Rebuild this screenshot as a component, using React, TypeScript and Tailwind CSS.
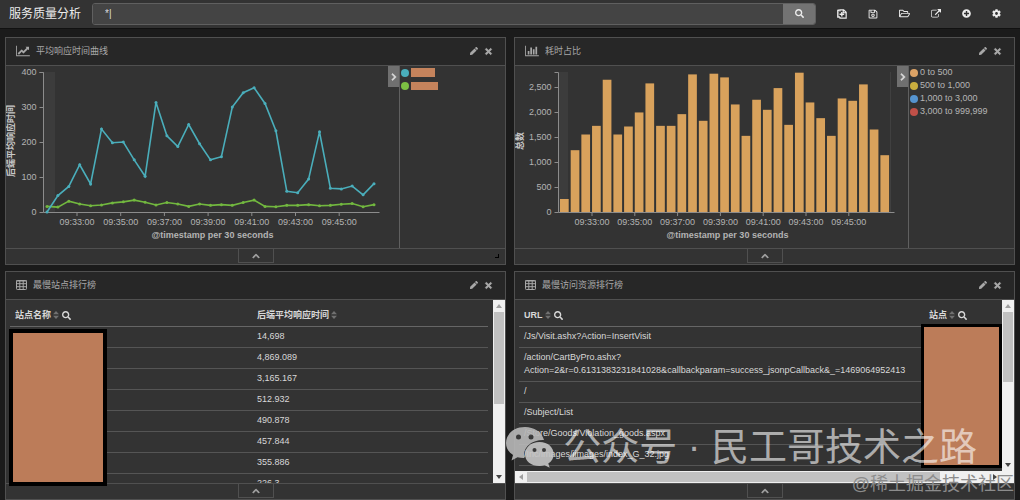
import React from "react";
import { twMerge } from "tailwind-merge";
import {
  FaChevronRight,
  FaChevronUp,
  FaCog,
  FaPen,
  FaPlusCircle,
  FaRegFolderOpen,
  FaRegSave,
  FaSearch,
  FaTimes,
} from "react-icons/fa";

const AVG = [
  0, 47, 73, 135, 80, 237, 198, 200, 149, 102, 313, 218, 187, 250, 195, 149,
  158, 300, 341, 355, 310, 232, 59, 55, 94, 229, 68, 66, 74, 49, 81,
];
const AVG_LOW = [
  16, 14, 31, 23, 18, 20, 26, 29, 34, 28, 20, 27, 23, 16, 23, 19, 21, 19, 27,
  34, 16, 15, 19, 19, 21, 18, 19, 22, 24, 15, 21,
];
const COUNTS = [
  260, 1236, 1550, 1723, 2645, 1550, 1710, 1991, 2572, 1723, 1723, 1957, 2752,
  1824, 2766, 2692, 2151, 1523, 2245, 2044, 2478, 1743, 2786, 2191, 1877, 1523,
  2271, 2224, 2552, 1650, 1136,
];
const TIMES = [
  "09:33:00",
  "09:35:00",
  "09:37:00",
  "09:39:00",
  "09:41:00",
  "09:43:00",
  "09:45:00",
];
const SITE_TIMES = [
  "14,698",
  "4,869.089",
  "3,165.167",
  "512.932",
  "490.878",
  "457.844",
  "355.886",
  "226.3",
];
const URLS = [
  "/Js/Visit.ashx?Action=InsertVisit",
  "/action/CartByPro.ashx?Action=2&r=0.6131383231841028&callbackparam=success_jsonpCallback&_=1469064952413",
  "/",
  "/Subject/List",
  "/Store/Goods/Violation_goods.aspx",
  "/Inc/images/iimages/index_G_32.jpg",
  "/shopping.ashx/list",
];

const LineChartIcon = () => (
  <svg viewBox="0 0 2048 1792" className="w-[14px] h-3" fill="currentColor">
    <path d="M2048 1536v128H0V128h128v1408h1920zM1920 288v435q0 21-19.5 29.5t-35.5-7.5l-121-121-633 633q-10 10-23 10t-23-10L832 1025l-416 416-192-192 585-585q10-10 23-10t23 10l233 233 464-464-121-121q-16-16-7.5-35.5t29.5-19.5h435q14 0 23 9t9 23z" />
  </svg>
);

const BarChartIcon = () => (
  <svg viewBox="0 0 2048 1792" className="w-[14px] h-3" fill="currentColor">
    <path d="M640 896v512H384V896h256zm384-512v1024H768V384h256zm1024 1152v128H0V128h128v1408h1920zm-640-896v768h-256V640h256zm384-384v1152h-256V256h256z" />
  </svg>
);

const TableIcon = () => (
  <svg viewBox="0 0 11 10" className="w-[11px] h-[10px]" fill="none" stroke="currentColor">
    <rect x="0.5" y="0.5" width="10" height="9" rx="0.8" />
    <path d="M0 1h11M0 3.7h11M0 6.7h11M3.8 0v10M7.2 0v10" />
  </svg>
);

const NewIcon = () => (
  <svg viewBox="0 0 12 12" className="size-[10px]" fill="none" stroke="currentColor" strokeWidth="1.4">
    <path d="M3.500 3V1H8l3 3v7H3.500V9.500M7.500 1v3.500H11" />
    <path d="M1 1.500h2M1 1v8.500h2.500M3 6.300h5.600M5.800 3.500v5.600" strokeWidth="1.7" />
  </svg>
);

const ExternalIcon = () => (
  <svg viewBox="0 0 1792 1792" className="size-[10px]" fill="currentColor">
    <path d="M1408 928v320q0 119-84.5 203.5T1120 1536H288q-119 0-203.5-84.5T0 1248V416q0-119 84.5-203.5T288 128h704q14 0 23 9t9 23v64q0 14-9 23t-23 9H288q-66 0-113 47t-47 113v832q0 66 47 113t113 47h832q66 0 113-47t47-113V928q0-14 9-23t23-9h64q14 0 23 9t9 23zM1792 64v512q0 26-19 45t-45 19-45-19l-176-176-652 652q-10 10-23 10t-23-10l-114-114q-10-10-10-23t10-23l652-652-176-176q-19-19-19-45t19-45 45-19h512q26 0 45 19t19 45z" />
  </svg>
);

const SortIcon = () => (
  <svg viewBox="0 0 6 8" className="w-[6px] h-2 text-[#707070]" fill="currentColor">
    <path d="M3 0l3 3.3H0zM3 8l3-3.3H0z" />
  </svg>
);

const WechatIcon = () => (
  <svg viewBox="0 0 50 42" className="w-[50px] h-[42px]">
    <path
      fill="#b9b9b9"
      d="M20 1C9 1 1 8 1 17c0 5 2.500 9 7 12l-1.500 5.500 6-3.200c2.300.6 4.500.9 7 .8C17 22 26 13.500 39 14 37 6 29 1 20 1z"
    />
    <path
      fill="#c6c6c6"
      d="M34.500 16C26 16 20 21.500 20 28.200S26 40 34.500 40c1.800 0 3.500-.3 5.200-.8l5 2.500-1.400-4.200c3.500-2.300 5.400-5.500 5.400-9.300C48.700 21.500 43 16 34.500 16z"
    />
    <g fill="#3a3a3a">
      <circle cx="13.500" cy="11" r="2.500" />
      <circle cx="26" cy="11" r="2.500" />
      <circle cx="29.500" cy="24" r="2" />
      <circle cx="39" cy="24" r="2" />
    </g>
  </svg>
);

type AxesProps = {
  axisX: number;
  labels: { text: string; y: number }[];
  firstTick: number;
  tickStep: number;
  title: string;
};

const Axes: React.FC<AxesProps> = ({ axisX, labels, firstTick, tickStep, title }) => (
  <>
    <g stroke="#8c8c8c" fill="none">
      <path d={`M${axisX - 4} 6.500H${axisX}V146.500H${axisX + 336}`} />
      {labels.map(({ text, y }) => (
        <path key={text} d={`M${axisX - 4} ${y}h4`} />
      ))}
      {TIMES.map((t, i) => (
        <path key={t} d={`M${firstTick + i * tickStep} 146v4`} />
      ))}
    </g>
    <g className="text-[9px]" fill="#b4b4b4">
      {labels.map(({ text, y }) => (
        <text key={text} x={axisX - 7} y={y + 2} textAnchor="end">
          {text}
        </text>
      ))}
      {TIMES.map((t, i) => (
        <text key={t} x={firstTick + i * tickStep} y="159" textAnchor="middle">
          {t}
        </text>
      ))}
      <text x={axisX + 169} y="172" textAnchor="middle" className="font-bold">
        @timestamp per 30 seconds
      </text>
      <text
        transform="translate(8 75) rotate(-90)"
        textAnchor="middle"
        className="font-bold"
        fill="#c8c8c8"
      >
        {title}
      </text>
    </g>
  </>
);

const Series: React.FC<{ values: number[]; color: string }> = ({ values, color }) => {
  const points = values.map((v, i) => [41 + i * 10.9, 146 - v * 0.35]);
  return (
    <g fill={color}>
      <polyline
        points={points.map((p) => p.join(",")).join(" ")}
        fill="none"
        stroke={color}
        strokeWidth="1.6"
      />
      {points.map(([x, y]) => (
        <circle key={x} cx={x} cy={y} r="1.5" />
      ))}
    </g>
  );
};

const LineChart = () => (
  <svg viewBox="0 0 382 182" preserveAspectRatio="xMinYMin" className="w-full h-[182px]">
    <rect x="38" y="6" width="11" height="140" fill="#3c3c3c" />
    <Axes
      axisX={37.5}
      labels={[400, 300, 200, 100, 0].map((n, i) => ({
        text: String(n),
        y: 6.5 + i * 35,
      }))}
      firstTick={71}
      tickStep={43.7}
      title="后端平均响应时间"
    />
    <Series values={AVG_LOW} color="#72b83f" />
    <Series values={AVG} color="#4aaebb" />
  </svg>
);

const BarChart = () => (
  <svg viewBox="0 0 382 182" preserveAspectRatio="xMinYMin" className="w-full h-[182px]">
    <rect x="44" y="6" width="9" height="140" fill="#3c3c3c" />
    <path d="M375.500 6v140" stroke="#404040" />
    {COUNTS.map((n, i) => (
      <rect
        key={i}
        x={45 + i * 10.68}
        y={146 - n * 0.05}
        width="8.7"
        height={n * 0.05}
        fill="#d9a25c"
      />
    ))}
    <Axes
      axisX={43.5}
      labels={["2,500", "2,000", "1,500", "1,000", "500", "0"].map((text, i) => ({
        text,
        y: 21.5 + i * 25,
      }))}
      firstTick={77}
      tickStep={42.8}
      title="总数"
    />
  </svg>
);

type PanelProps = {
  icon: React.ReactNode;
  title: string;
  resizable?: boolean;
  children: React.ReactNode;
};

const Panel: React.FC<PanelProps> = ({ icon, title, resizable, children }) => (
  <section className="min-w-0 border border-[#505050] bg-[#333333]">
    <header className="flex h-7 items-center border-b border-[#505050] bg-[#272727] pb-px pl-[10px] pr-3 text-[#a8a8a8]">
      {icon}
      <h2 className="ml-[6px] flex-1 text-[9px]">{title}</h2>
      <button aria-label="编辑" className="mr-[6px]">
        <FaPen className="size-2" />
      </button>
      <button aria-label="移除">
        <FaTimes className="size-[9px]" stroke="currentColor" strokeWidth="40" />
      </button>
    </header>
    {children}
    <footer className="relative flex h-4 justify-center border-t border-[#505050]">
      <button
        aria-label="展开"
        className="flex h-[14px] w-9 items-center justify-center border-x border-b border-[#505050] text-[#a8a8a8]"
      >
        <FaChevronUp className="size-2" stroke="currentColor" strokeWidth="30" />
      </button>
      {resizable && (
        <span className="absolute right-[6px] bottom-[6px] size-1 border-r border-b border-black" />
      )}
    </footer>
  </section>
);

const ChartBody: React.FC<{ chart: React.ReactNode; children: React.ReactNode }> = ({
  chart,
  children,
}) => (
  <div className="flex h-[182px]">
    <div className="min-w-0 flex-1">{chart}</div>
    <button
      aria-label="图例"
      className="flex h-[21px] w-[11px] items-center justify-center bg-[#707070] text-[#dddddd]"
    >
      <FaChevronRight className="size-2" stroke="currentColor" strokeWidth="40" />
    </button>
    <ul className="w-[106px] border-l border-[#606060] pl-px text-[9px] text-[#b5b5b5]">
      {children}
    </ul>
  </div>
);

const Legend: React.FC<{ dot: string; children: React.ReactNode }> = ({ dot, children }) => (
  <li className="flex h-[13px] items-center gap-[2px] whitespace-nowrap">
    <span className={twMerge("size-2 rounded-full", dot)} />
    {children}
  </li>
);

const Head: React.FC<{ label: string; search?: boolean; className?: string }> = ({
  label,
  search,
  className,
}) => (
  <th className={twMerge("px-[5px] pt-[5px] text-left font-bold", className)}>
    <div className="flex items-center gap-[2px]">
      {label}
      <SortIcon />
      {search && <FaSearch className="ml-px size-[9px]" />}
    </div>
  </th>
);

const Arrow: React.FC<{ className?: string }> = ({ className }) => (
  <svg viewBox="0 0 6 4" className={twMerge("w-[6px] h-1 text-[#444444]", className)}>
    <path d="M0 4l3-4 3 4z" fill="currentColor" />
  </svg>
);

const VerticalBar: React.FC<{ thumb: string }> = ({ thumb }) => (
  <div className="flex w-3 shrink-0 flex-col items-center bg-[#f0f0f0]">
    <div className="flex h-3 items-center">
      <Arrow className="text-[#a0a0a0]" />
    </div>
    <div className={twMerge("w-[10px] bg-[#c1c1c1]", thumb)} />
    <div className="mt-auto flex h-3 items-center">
      <Arrow className="rotate-180" />
    </div>
  </div>
);

export default function App() {
  return (
    <main className="relative overflow-hidden bg-[#1b1b1b] pb-[2px] font-['Liberation_Sans','Noto_Sans_CJK_SC',sans-serif] leading-[13px]">
      <nav className="flex h-[29px] items-center border-b border-[#111111] bg-[#333333] pb-px pl-[9px] pr-[19px] text-[#ececec]">
        <h1 className="text-xs">服务质量分析</h1>
        <form className="ml-[11px] flex h-[22px] flex-1 overflow-hidden rounded-[3px] border border-[#606060]">
          <input
            aria-label="查询"
            defaultValue="*|"
            className="min-w-0 flex-1 bg-[#444444] px-3 text-[10px] text-[#dddddd] outline-none"
          />
          <button
            type="button"
            aria-label="搜索"
            className="flex w-8 items-center justify-center bg-[#737373]"
          >
            <FaSearch className="size-[9px]" />
          </button>
        </form>
        <div className="ml-[21px] flex items-center gap-[21px]">
          <button aria-label="新建">
            <NewIcon />
          </button>
          <button aria-label="保存">
            <FaRegSave className="size-[10px]" />
          </button>
          <button aria-label="打开">
            <FaRegFolderOpen className="size-[11px]" />
          </button>
          <button aria-label="分享">
            <ExternalIcon />
          </button>
          <button aria-label="添加">
            <FaPlusCircle className="size-[9px]" />
          </button>
          <button aria-label="设置">
            <FaCog className="size-[9px]" />
          </button>
        </div>
      </nav>

      <div className="grid grid-cols-2 gap-x-2 gap-y-[6px] px-[5px] pt-2">
        <Panel icon={<LineChartIcon />} title="平均响应时间曲线" resizable>
          <ChartBody chart={<LineChart />}>
            <Legend dot="bg-[#4aaebb]">
              <span className="h-[9px] w-6 bg-[#c5835c]" />
            </Legend>
            <Legend dot="bg-[#7cc043]">
              <span className="h-2 w-[27px] bg-[#c5835c]" />
            </Legend>
          </ChartBody>
        </Panel>

        <Panel icon={<BarChartIcon />} title="耗时占比">
          <ChartBody chart={<BarChart />}>
            <Legend dot="bg-[#dca366]">0 to 500</Legend>
            <Legend dot="bg-[#c9ae3e]">500 to 1,000</Legend>
            <Legend dot="bg-[#5594cf]">1,000 to 3,000</Legend>
            <Legend dot="bg-[#c05048]">3,000 to 999,999</Legend>
          </ChartBody>
        </Panel>

        <Panel icon={<TableIcon />} title="最慢站点排行榜">
          <div className="relative flex h-[183px]">
            <div className="min-w-0 flex-1 overflow-hidden pl-1 pr-[5px]">
              <table className="w-full text-[9px] text-[#d8d8d8]">
                <thead>
                  <tr className="h-[26px] border-b border-[#666666]">
                    <Head label="站点名称" search className="w-[242px]" />
                    <Head label="后端平均响应时间" />
                  </tr>
                </thead>
                <tbody>
                  {SITE_TIMES.map((time) => (
                    <tr key={time} className="border-b border-[#555555]">
                      <td />
                      <td className="px-[5px] pt-[3px] pb-1">{time}</td>
                    </tr>
                  ))}
                </tbody>
              </table>
            </div>
            <VerticalBar thumb="h-[92px]" />
            <div className="absolute top-[29px] left-[3px] z-10 h-[157px] w-[98px] border-4 border-black bg-[#bc7c59]" />
          </div>
        </Panel>

        <Panel icon={<TableIcon />} title="最慢访问资源排行榜">
          <div className="relative flex h-[171px]">
            <div className="min-w-0 flex-1 overflow-hidden pl-1">
              <table className="w-full text-[9px] text-[#d8d8d8]">
                <thead>
                  <tr className="h-[26px] border-b border-[#666666]">
                    <Head label="URL" search />
                    <Head label="站点" search className="w-[78px]" />
                  </tr>
                </thead>
                <tbody>
                  {URLS.map((url, i) => (
                    <tr key={url} className="border-b border-[#555555]">
                      <td className="px-[5px] pt-[3px] pb-1">{url}</td>
                      <td className="px-[5px] pt-[3px] pb-1">
                        {i === URLS.length - 1 && "photo.100"}
                      </td>
                    </tr>
                  ))}
                </tbody>
              </table>
            </div>
            <VerticalBar thumb="h-[70px]" />
            <div className="absolute top-6 right-3 h-[144px] w-[81px] border-[3px] border-black bg-[#bc7c59]" />
          </div>
          <div className="flex h-3 items-center bg-[#f0f0f0] pr-4">
            <div className="flex w-3 justify-center">
              <Arrow className="-rotate-90 text-[#a0a0a0]" />
            </div>
            <div className="h-[10px] flex-1 bg-[#c1c1c1]" />
            <div className="flex w-[58px] justify-end">
              <Arrow className="rotate-90" />
            </div>
          </div>
        </Panel>
      </div>

      <div className="pointer-events-none absolute right-[43px] bottom-[31px] z-20 flex items-center gap-2">
        <div className="opacity-90">
          <WechatIcon />
        </div>
        <p className="whitespace-pre text-[38px] leading-[48px] text-white/60">
          公众号 · 民工哥技术之路
        </p>
      </div>
      <p className="pointer-events-none absolute right-[6px] bottom-[6px] z-20 text-[18px] leading-6 text-[#8c8c8c]">
        @稀土掘金技术社区
      </p>
    </main>
  );
}
